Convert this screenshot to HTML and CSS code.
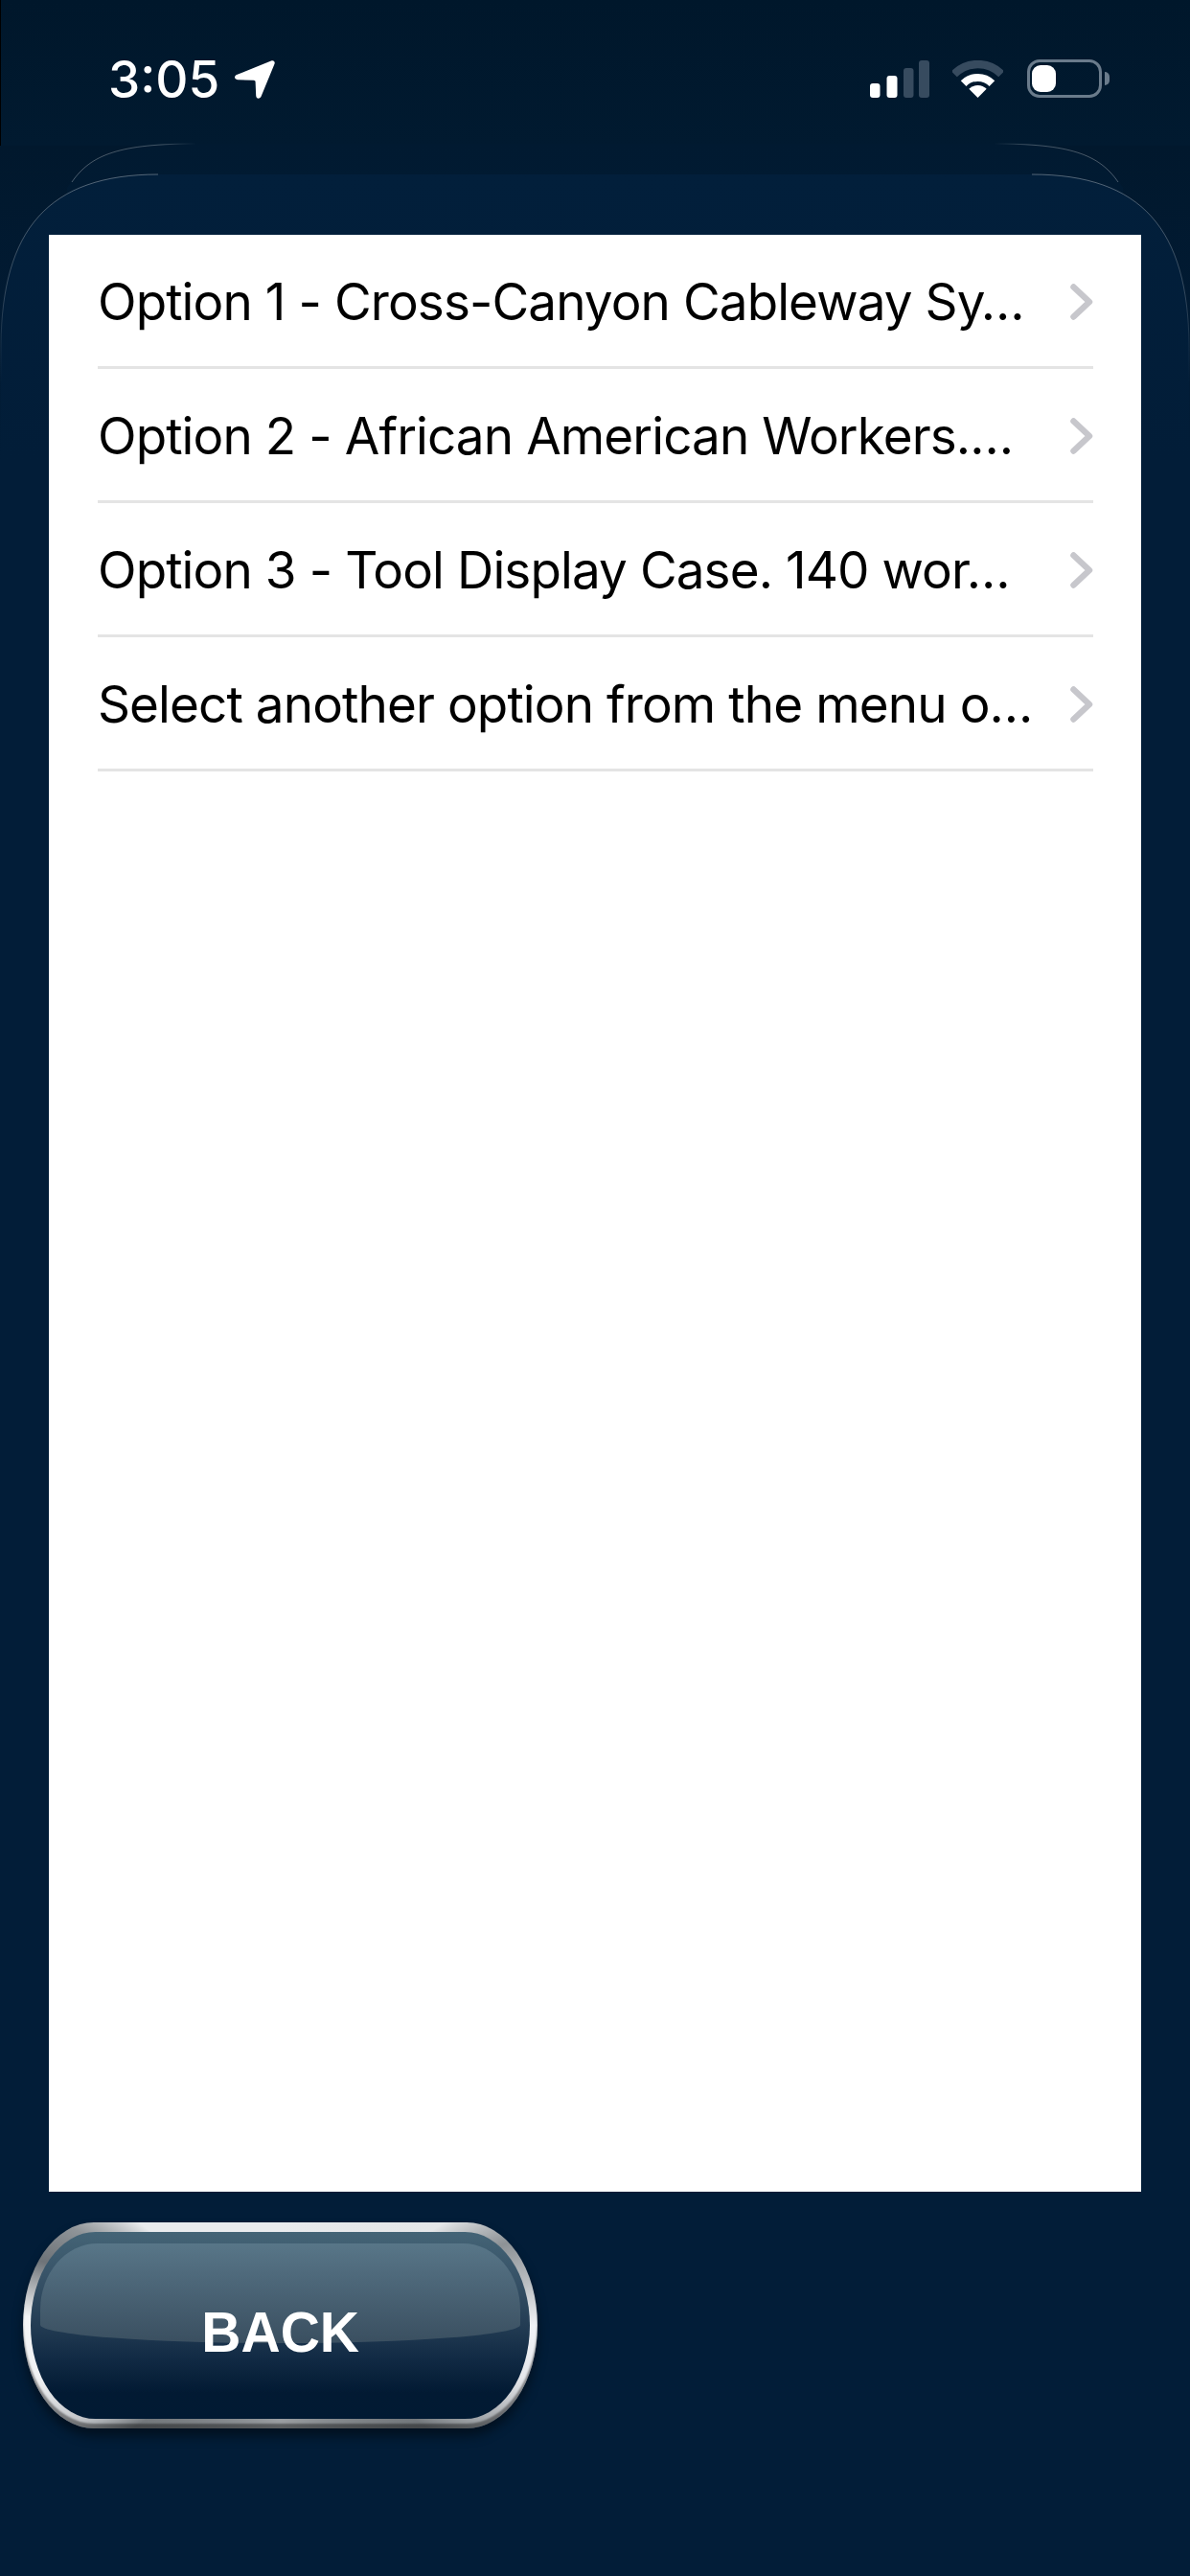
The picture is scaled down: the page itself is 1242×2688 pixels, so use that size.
FILE: index.html
```html
<!DOCTYPE html>
<html lang="en">
<head>
<meta charset="utf-8">
<title>Options</title>
<link rel="stylesheet" href="styles.css">
</head>
<body>
<div class="page">
  <svg class="chrome" width="1242" height="480" viewBox="0 0 1242 480" aria-hidden="true">
    <defs>
      <linearGradient id="topFade" x1="0" y1="0" x2="0" y2="1">
        <stop offset="0" stop-color="#00172b"/>
        <stop offset="1" stop-color="#011a30"/>
      </linearGradient>
      <linearGradient id="backFill" x1="0" y1="0" x2="0" y2="1">
        <stop offset="0" stop-color="#011a31"/>
        <stop offset="1" stop-color="#011c35"/>
      </linearGradient>
      <linearGradient id="shellFill" x1="0" y1="0" x2="0" y2="1">
        <stop offset="0" stop-color="#021f3b"/>
        <stop offset="1" stop-color="#021d38"/>
      </linearGradient>
      <linearGradient id="cornerFade" x1="0" y1="0" x2="0" y2="1">
        <stop offset="0" stop-color="#01182d"/>
        <stop offset="1" stop-color="#021d38"/>
      </linearGradient>
      <linearGradient id="lineL" gradientUnits="userSpaceOnUse" x1="0" y1="182" x2="0" y2="400">
        <stop offset="0" stop-color="#fff" stop-opacity=".32"/>
        <stop offset=".55" stop-color="#fff" stop-opacity=".2"/>
        <stop offset="1" stop-color="#fff" stop-opacity="0"/>
      </linearGradient>
      <linearGradient id="lineTopL" gradientUnits="userSpaceOnUse" x1="60" y1="0" x2="205" y2="0">
        <stop offset="0" stop-color="#fff" stop-opacity=".3"/>
        <stop offset=".75" stop-color="#fff" stop-opacity=".25"/>
        <stop offset="1" stop-color="#fff" stop-opacity="0"/>
      </linearGradient>
      <linearGradient id="lineTopR" gradientUnits="userSpaceOnUse" x1="1182" y1="0" x2="1037" y2="0">
        <stop offset="0" stop-color="#fff" stop-opacity=".3"/>
        <stop offset=".75" stop-color="#fff" stop-opacity=".25"/>
        <stop offset="1" stop-color="#fff" stop-opacity="0"/>
      </linearGradient>
    </defs>
    <rect x="0" y="0" width="1242" height="152" fill="url(#topFade)"/>
    <rect x="0" y="152" width="1242" height="328" fill="url(#cornerFade)"/>
    <rect x="0" y="0" width="1" height="152" fill="#000"/>
    <path d="M70 196 C90 165 120 150 205 150 L1037 150 C1122 150 1152 165 1172 196 L1172 300 L70 300 Z" fill="url(#backFill)"/>
    <path d="M1 480 L1 360 C2 240 50 182 165 182 L1077 182 C1192 182 1240 240 1241 360 L1241 480 Z" fill="url(#shellFill)"/>
    <path d="M75 190 C95 161 125 150 205 150" fill="none" stroke="url(#lineTopL)" stroke-width="1"/>
    <path d="M1167 190 C1147 161 1117 150 1037 150" fill="none" stroke="url(#lineTopR)" stroke-width="1"/>
    <path d="M1 400 L1 360 C2 240 50 182 165 182" fill="none" stroke="url(#lineL)" stroke-width="1"/>
    <path d="M1241 400 L1241 360 C1240 240 1192 182 1077 182" fill="none" stroke="url(#lineL)" stroke-width="1"/>
  </svg>

  <header class="status">
    <div class="status-left">
      <span class="time">3:05</span>
      <svg class="arrow" width="44" height="42" viewBox="0 0 44 42" aria-hidden="true">
        <path d="M39 1.5 C41.5 .5 43.4 2.3 42.5 4.8 L28.6 38.6 C27.2 41.8 23.3 41.2 23.2 37.8 L22.6 23.6 C22.6 22.4 21.9 21.7 20.7 21.7 L4 21.2 C.6 21 -.1 17.4 3 16 Z" fill="#fff"/>
      </svg>
    </div>
    <div class="status-right">
      <svg class="signal" width="62" height="39" viewBox="0 0 62 39" aria-hidden="true">
        <rect x="0" y="24" width="10.5" height="15" rx="3" fill="#fff"/>
        <rect x="17.5" y="16" width="11" height="23" rx="3" fill="#fff"/>
        <rect x="35" y="8" width="10.5" height="31" rx="3" fill="#374b5f"/>
        <rect x="51" y="0" width="11" height="39" rx="3" fill="#374b5f"/>
      </svg>
      <svg class="wifi" width="53" height="39" viewBox="0 0 53 39" aria-hidden="true">
        <path d="M1.8 14.3 A35 35 0 0 1 51.2 14.3" fill="none" stroke="#374b5f" stroke-width="8.5"/>
        <path d="M11.6 24.1 A21 21 0 0 1 41.4 24.1" fill="none" stroke="#fff" stroke-width="8"/>
        <path d="M26.5 39 L17.3 29.8 A13 13 0 0 1 35.7 29.8 Z" fill="#fff"/>
      </svg>
      <div class="battery">
        <div class="battery-body"><div class="battery-level"></div></div>
        <div class="battery-nub"></div>
      </div>
    </div>
  </header>

  <main class="shell">
    <ul class="panel">
      <li class="row">
        <span class="row-label">Option 1 - Cross-Canyon Cableway Sy…</span>
        <svg class="chev" width="24" height="38" viewBox="0 0 24 38" aria-hidden="true"><path d="M3.5 3.5 L20 19 L3.5 34.5" /></svg>
      </li>
      <li class="row">
        <span class="row-label">Option 2 - African American Workers.…</span>
        <svg class="chev" width="24" height="38" viewBox="0 0 24 38" aria-hidden="true"><path d="M3.5 3.5 L20 19 L3.5 34.5" /></svg>
      </li>
      <li class="row">
        <span class="row-label">Option 3 - Tool Display Case. 140 wor…</span>
        <svg class="chev" width="24" height="38" viewBox="0 0 24 38" aria-hidden="true"><path d="M3.5 3.5 L20 19 L3.5 34.5" /></svg>
      </li>
      <li class="row">
        <span class="row-label">Select another option from the menu o…</span>
        <svg class="chev" width="24" height="38" viewBox="0 0 24 38" aria-hidden="true"><path d="M3.5 3.5 L20 19 L3.5 34.5" /></svg>
      </li>
    </ul>
    <button class="back" type="button">
      <span class="back-inner">
        <span class="back-gloss"></span>
        <span class="back-label">BACK</span>
      </span>
    </button>
  </main>
</div>
</body>
</html>
```

FILE: styles.css
```css
* { box-sizing: border-box; }

html, body {
  margin: 0;
  padding: 0;
}

.page {
  position: relative;
  width: 1242px;
  height: 2688px;
  overflow: hidden;
  display: flex;
  flex-direction: column;
  background: #021d38;
  font-family: Inter, "Liberation Sans", sans-serif;
}

.chrome {
  position: absolute;
  top: 0;
  left: 0;
}

.status {
  position: relative;
  height: 150px;
  flex: none;
  display: flex;
  justify-content: space-between;
  align-items: flex-start;
  padding: 62px 84px 0 113px;
}

.status-left {
  display: flex;
  align-items: center;
  gap: 15px;
  height: 42px;
}

.time {
  color: #fff;
  font-size: 53px;
  font-weight: 500;
  line-height: 42px;
}

.arrow { display: block; }

.status-right {
  display: flex;
  align-items: flex-start;
  height: 42px;
}

.signal { display: block; margin-top: 1px; margin-right: 24px; }
.wifi { display: block; margin-top: 1px; margin-right: 25px; }

.battery {
  display: flex;
  align-items: center;
  gap: 3px;
  height: 40px;
}

.battery-body {
  width: 78px;
  height: 40px;
  border: 3px solid #6a7b8b;
  border-radius: 13px;
  padding: 3px 2px;
}

.battery-level {
  width: 25px;
  height: 100%;
  background: #fff;
  border-radius: 9px;
}

.battery-nub {
  width: 5px;
  height: 14px;
  background: #6a7b8b;
  border-radius: 0 6px 6px 0;
}

.shell {
  position: relative;
  flex: 1;
  display: flex;
  flex-direction: column;
  align-items: flex-start;
  padding: 95px 24px 0;
}

.panel {
  list-style: none;
  margin: 0 27px;
  padding: 0;
  width: 1140px;
  height: 2042px;
  flex: none;
  background: #fff;
}

.row {
  height: 140px;
  margin: 0 50px 0 51px;
  display: flex;
  align-items: center;
  justify-content: space-between;
  border-bottom: 3px solid #e4e4e4;
  padding: 3px 0 0 0;
}

.row-label {
  color: #000;
  font-size: 53px;
  letter-spacing: -0.9px;
  white-space: nowrap;
}

.chev { flex: none; display: block; }

.chev path {
  fill: none;
  stroke: #c7c7cc;
  stroke-width: 6.5;
  stroke-linecap: round;
  stroke-linejoin: round;
}

.back {
  margin-top: 32px;
  width: 537px;
  height: 215px;
  padding: 10px 8px;
  border: 0;
  border-radius: 74px / 107px;
  background:
    conic-gradient(from 0deg,
      #e9ebed 0deg, #e4e6e8 58deg, #8d9296 70deg, #b9bdc1 80deg, #f0f2f6 90deg,
      #e6e8ec 102deg, #b0b4b8 112deg, #74797d 125deg, #9a9ea2 180deg,
      #74797d 235deg, #c3c6ca 245deg, #f1f2f4 258deg, #f4f5f6 272deg,
      #6e7378 285deg, #8f9498 295deg, #e9ebed 306deg, #e9ebed 360deg);
  box-shadow: 0 8px 12px rgba(0, 0, 0, .45), inset 0 -5px 2px rgba(0, 0, 0, .4);
  display: block;
}

.back-inner {
  position: relative;
  display: flex;
  align-items: center;
  justify-content: center;
  width: 100%;
  height: 100%;
  padding-top: 14px;
  border-radius: 68px / 98px;
  background: linear-gradient(180deg, #446476 0%, #375267 25%, #233c53 50%, #112a44 68%, #021a33 86%, #011a33 100%);
  overflow: hidden;
}

.back-gloss {
  position: absolute;
  top: 12px;
  left: 10px;
  right: 10px;
  height: 104px;
  border-radius: 62px 62px 260px 260px / 72px 72px 20px 20px;
  background: linear-gradient(180deg, #587688 0%, #4c6678 40%, #3a4f60 100%);
}

.back-label {
  position: relative;
  color: #fff;
  font-family: "Liberation Sans", Arial, sans-serif;
  font-size: 60px;
  font-weight: 700;
  line-height: 1;
  transform: scaleX(.95);
}
```
